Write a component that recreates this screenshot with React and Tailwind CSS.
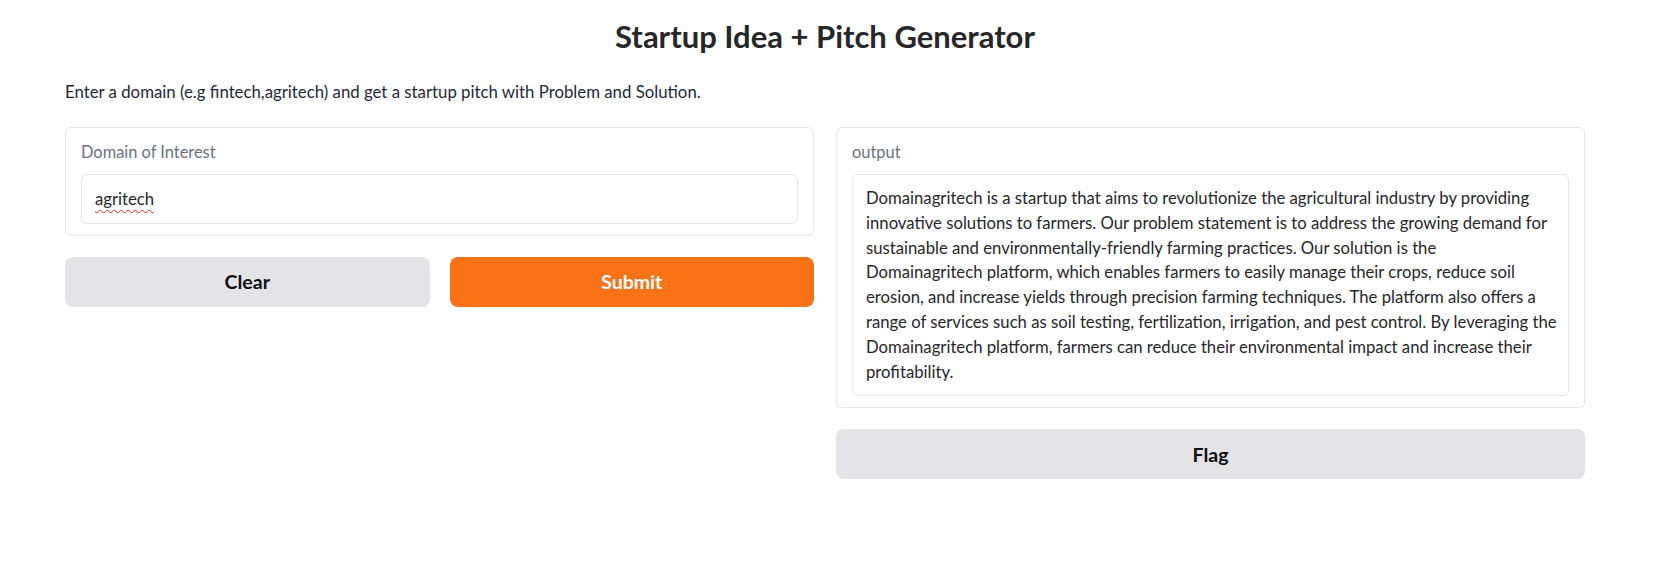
const lines = [
  "Domainagritech is a startup that aims to revolutionize the agricultural industry by providing",
  "innovative solutions to farmers. Our problem statement is to address the growing demand for",
  "sustainable and environmentally-friendly farming practices. Our solution is the",
  "Domainagritech platform, which enables farmers to easily manage their crops, reduce soil",
  "erosion, and increase yields through precision farming techniques. The platform also offers a",
  "range of services such as soil testing, fertilization, irrigation, and pest control. By leveraging the",
  "Domainagritech platform, farmers can reduce their environmental impact and increase their",
  "profitability.",
];

function Block({ label, children }) {
  return (
    <div className="rounded-md border border-[#e5e7eb] bg-white px-[15px] pt-[12px] pb-[11px]">
      <div className="mb-[10px] text-[16.4px] leading-[24px] text-[#6b7280]">{label}</div>
      {children}
    </div>
  );
}

export default function App() {
  return (
    <div className="min-h-[572px] bg-white text-[#27272a]" style={{ fontFamily: "Lato, 'Noto Sans', sans-serif" }}>
      <div className="ml-[65px] w-[1520px] pt-[16px]">
        <h1 className="text-center text-[31px] font-bold leading-[40px] text-[#27272a]">Startup Idea + Pitch Generator</h1>
        <p className="mt-[24px] text-[16.8px] leading-[24px] text-[#1f2937]">
          Enter a domain (e.g fintech,agritech) and get a startup pitch with Problem and Solution.
        </p>

        <div className="mt-[23px] grid grid-cols-2 gap-[22px]">
          <div className="flex flex-col gap-[21px]">
            <Block label="Domain of Interest">
              <div className="h-[50px] rounded-md border border-[#e5e7eb] px-[13px] py-[12px] text-[16.7px] leading-[24px]">
                <span className="underline decoration-wavy decoration-[#dc2626] decoration-[1px] underline-offset-[4px]">agritech</span>
              </div>
            </Block>
            <div className="grid grid-cols-2 gap-[20px]">
              <button className="h-[50px] rounded-lg bg-[#e4e4e7] text-[19.5px] font-bold text-[#0f0f10]">Clear</button>
              <button className="h-[50px] rounded-lg bg-[#f97316] text-[19.5px] font-bold text-white">Submit</button>
            </div>
          </div>

          <div className="flex flex-col gap-[21px]">
            <Block label="output">
              <div className="rounded-md border border-[#e5e7eb] px-[13px] py-[11px] text-[16.7px] leading-[24.8px] whitespace-nowrap">
                {lines.map((l, i) => (
                  <div key={i}>{l}</div>
                ))}
              </div>
            </Block>
            <button className="h-[50px] rounded-lg bg-[#e4e4e7] text-[19.5px] font-bold text-[#0f0f10]">Flag</button>
          </div>
        </div>
      </div>
    </div>
  );
}
